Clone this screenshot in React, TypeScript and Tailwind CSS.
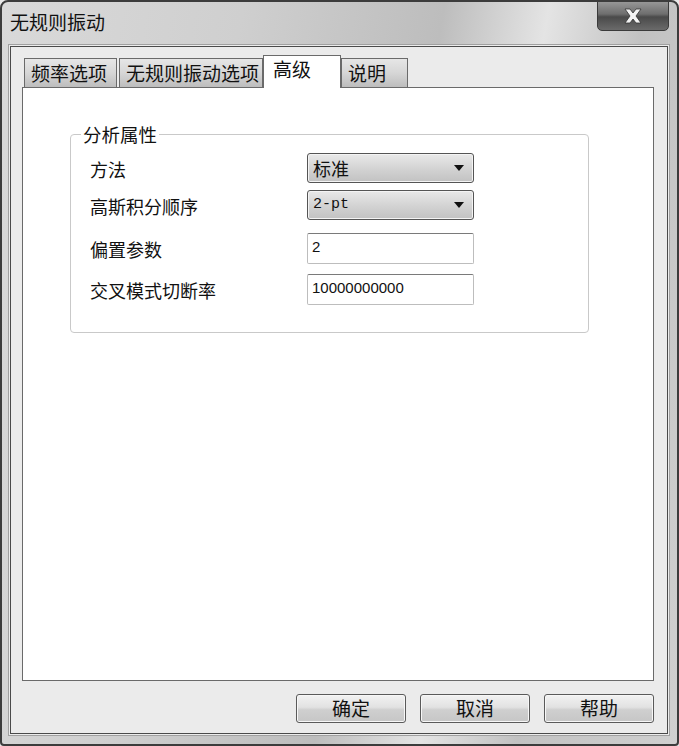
import React from "react";

const cjk = "font-['Noto_Sans_CJK_SC','Noto_Sans',sans-serif]";

function Tab({ label, selected, w }: { label: string; selected?: boolean; w: string }) {
  if (selected) {
    return (
      <div
        className={`${w} h-[33px] -mb-px relative z-10 bg-white border border-b-0 border-[#6a6a6a] flex items-start pl-[9px] pt-[0px] text-[19px] leading-[25px] text-[#111]`}
      >
        {label}
      </div>
    );
  }
  return (
    <div
      className={`${w} h-[29px] bg-[linear-gradient(#e6e6e6,#d6d6d6_50%,#bdbdbd)] border border-b-0 border-[#6a6a6a] flex items-start pl-[6px] pt-[1px] text-[19px] leading-[25px] text-[#111]`}
    >
      {label}
    </div>
  );
}

function Select({ value, mono }: { value: string; mono?: boolean }) {
  return (
    <div className="w-[167px] h-[30px] rounded-[3px] border border-[#555] bg-[linear-gradient(#e9e9e9,#d2d2d2_55%,#c2c2c2)] shadow-[inset_0_0_0_1px_#f4f4f4] flex items-center pl-[5px] pr-[9px]">
      <span
        className={
          mono
            ? "flex-1 text-[15px] font-['Liberation_Mono',monospace] text-[#111]"
            : "flex-1 text-[18px] text-[#111]"
        }
      >
        {value}
      </span>
      <svg width="10" height="6" viewBox="0 0 10 6">
        <path d="M0 0 H10 L5 6 Z" fill="#111" />
      </svg>
    </div>
  );
}

function Field({ value }: { value: string }) {
  return (
    <div className="w-[167px] h-[31px] rounded-[2px] border border-[#bdbdbd] border-t-[#7a7a7a] bg-white flex items-center pl-[4px] pb-[3px]">
      <span className="text-[15px] font-['Liberation_Sans',sans-serif] text-[#111]">{value}</span>
    </div>
  );
}

function Btn({ label }: { label: string }) {
  return (
    <div className="w-[110px] h-[29px] rounded-[3px] border border-[#5a5a5a] bg-[linear-gradient(#f2f2f2,#e2e2e2_45%,#cfcfcf_55%,#c6c6c6)] shadow-[inset_0_0_0_1px_#f7f7f7] flex items-center justify-center text-[19px] text-[#111]">
      {label}
    </div>
  );
}

export default function App() {
  const rows: [string, React.ReactNode, string][] = [
    ["方法", <Select value="标准" />, "h-[37px]"],
    ["高斯积分顺序", <Select value="2-pt" mono />, "h-[43px]"],
    ["偏置参数", <Field value="2" />, "h-[41px]"],
    ["交叉模式切断率", <Field value="10000000000" />, "h-[31px]"],
  ];
  return (
    <div className={`w-[679px] h-[746px] ${cjk} bg-[#e8e8e8]`}>
      <div className="w-[679px] h-[746px] rounded-t-[8px] rounded-b-[4px] border-2 border-[#3c3c3c] bg-[linear-gradient(100deg,#d9d9d9_0%,#cfcfcf_30%,#bdbdbd_55%,#e4e4e4_68%,#c2c2c2_80%,#d0d0d0_100%)] flex flex-col relative overflow-hidden">
        {/* title bar */}
        <div className="h-[42px] flex items-start pl-[8px] pt-[7px] text-[19px] leading-[25px] text-[#111] shrink-0">
          无规则振动
        </div>
        <div className="absolute right-[8px] top-[-2px] w-[72px] h-[31px] rounded-b-[5px] border border-[#3a3a3a] bg-[linear-gradient(#9a9a9a,#6e6e6e_45%,#4a4a4a_55%,#6a6a6a)] flex items-center justify-center">
          <svg width="22" height="16" viewBox="0 0 22 16">
            <path
              d="M3 1 H8 L11 5 L14 1 H19 L14 8 L19 15 H14 L11 11 L8 15 H3 L8 8 Z"
              fill="#f4f4f4"
              stroke="#333"
              strokeWidth="0.8"
            />
          </svg>
        </div>
        {/* client frame */}
        <div className="ml-[6px] mr-[7px] mb-[8px] flex-1 border border-[#a0a0a0] bg-[#ececec] flex">
          <div className="flex-1 m-[1px] border border-[#4a4a4a] bg-[#ebebeb] flex flex-col pl-[11px] pr-[13px] pt-[8px]">
            {/* tabs */}
            <div className="flex items-end h-[32px] pl-[2px]">
              <Tab label="频率选项" w="w-[93px]" />
              <div className="w-[2px]" />
              <Tab label="无规则振动选项" w="w-[144px]" />
              <Tab label="高级" selected w="w-[78px]" />
              <Tab label="说明" w="w-[67px]" />
            </div>
            {/* panel */}
            <div className="h-[594px] bg-white border border-[#6a6a6a] pl-[47px] pt-[46px]">
              <div className="w-[519px] h-[199px] rounded-[4px] border border-[#c9c9c9] relative pl-[19px] pt-[18px]">
                <div className="absolute left-[10px] top-[-13px] bg-white px-[2px] text-[18.5px] leading-[24px] text-[#111]">
                  分析属性
                </div>
                <div className="flex flex-col">
                  {rows.map(([l, c, h]) => (
                    <div key={l} className={`flex items-start ${h}`}>
                      <div className="w-[217px] text-[18px] leading-[30px] pt-[1px] text-[#111]">{l}</div>
                      {c}
                    </div>
                  ))}
                </div>
              </div>
            </div>
            {/* buttons */}
            <div className="flex justify-end gap-[14px] pt-[13px] pr-0">
              <Btn label="确定" />
              <Btn label="取消" />
              <Btn label="帮助" />
            </div>
          </div>
        </div>
      </div>
    </div>
  );
}
